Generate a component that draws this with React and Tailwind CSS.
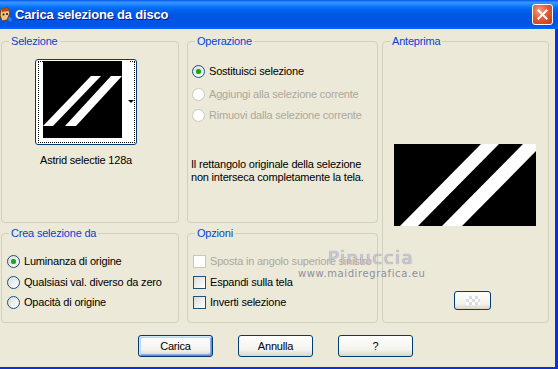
import React from 'react';

const font = "font-['Liberation_Sans',Arial,sans-serif]";

function Radio({ checked, disabled }) {
  return (
    <span
      className={`w-[13px] h-[13px] shrink-0 rounded-full border flex items-center justify-center ${
        disabled
          ? 'border-[#cac8bb] bg-white'
          : 'border-[#1c5180] bg-[linear-gradient(135deg,#dcdcd7,#ffffff)]'
      }`}
    >
      {checked && <span className="w-[5px] h-[5px] rounded-full bg-[#21a121] shadow-[0_0_1px_#5fd35f]" />}
    </span>
  );
}

function Check({ disabled }) {
  return (
    <span
      className={`w-[13px] h-[13px] shrink-0 border ${
        disabled
          ? 'border-[#cac8bb] bg-white'
          : 'border-[#1c5180] bg-[linear-gradient(135deg,#dcdcd7,#ffffff)]'
      }`}
    />
  );
}

function Group({ title, className, children }) {
  return (
    <fieldset className={`border border-[#d0d0bf] rounded-[4px] ${className}`}>
      <legend className="ml-[7px] px-[2px] leading-[13px] text-[#0046d5]">{title}</legend>
      {children}
    </fieldset>
  );
}

function Button({ children, isDefault }) {
  return (
    <button
      className={`w-[75px] h-[22px] rounded-[3px] border border-[#003c74] bg-[linear-gradient(to_bottom,#ffffff,#f3f2ec_70%,#d9d5c8)] text-black leading-[13px] ${
        isDefault
          ? 'shadow-[inset_1px_1px_0_#cee7ff,inset_-1px_-1px_0_#6982ee,inset_2px_2px_0_#bcd4f6,inset_-2px_-2px_0_#89ade4]'
          : ''
      }`}
    >
      {children}
    </button>
  );
}

export default function App() {
  return (
    <div className={`relative w-[558px] h-[369px] overflow-hidden bg-[#ece9d8] text-[11px] tracking-[-0.2px] text-black flex flex-col ${font}`}>
      {/* title bar */}
      <div className="h-[29px] shrink-0 flex items-center bg-[linear-gradient(to_bottom,#0058ee_0%,#3a93ff_8%,#288eff_14%,#127dff_20%,#036ffc_26%,#0262ee_36%,#0057e5_50%,#0054e3_80%,#0055eb_90%,#005bf5_94%,#026afe_97%,#0062ef_100%)]">
        <svg width="14" height="16" viewBox="0 0 14 16" className="ml-[-1px] mt-[1px]">
          <path d="M2 2 L9 1 L11 6 L8 13 L3 14 L1 8 Z" fill="#f2c27a" stroke="#7a3b12" strokeWidth="1" />
          <path d="M2 2 L9 1 L10 4 L3 5 Z" fill="#b64a1e" />
          <circle cx="4.5" cy="7.5" r="1" fill="#1a1a1a" />
          <circle cx="8" cy="7" r="1" fill="#1a1a1a" />
          <path d="M10 9 L13 12 L12 15 L9 13 Z" fill="#3f7fd8" />
        </svg>
        <span className="ml-[2px] text-white font-bold text-[13px] tracking-[-0.2px] font-['Liberation_Sans_Narrow','Liberation_Sans',sans-serif] [text-shadow:1px_1px_#0a1883]">
          Carica selezione da disco
        </span>
        <div className="ml-auto mr-[5px] w-[21px] h-[21px] rounded-[3px] border border-white bg-[radial-gradient(circle_at_35%_30%,#f0a080,#e35b36_45%,#c4381b)] flex items-center justify-center">
          <svg width="11" height="11" viewBox="0 0 11 11">
            <path d="M1.5 1.5 L9.5 9.5 M9.5 1.5 L1.5 9.5" stroke="white" strokeWidth="2" strokeLinecap="square" />
          </svg>
        </div>
      </div>

      {/* body */}
      <div className="flex-1 flex flex-col border-r-[3px] border-b-[2px] border-[#0831d9] pt-[6px] pl-[1px]">
        <div className="flex items-start">
          {/* column 1 */}
          <div className="w-[178px] flex flex-col">
            <Group title="Selezione" className="h-[188px]">
              <div className="ml-[33px] mt-[11px] w-[102px] flex flex-col">
                <div className="relative w-[102px] h-[86px] rounded-[3px] border border-[#003c74] bg-white p-[1px_1px_1px_2px]">
                  <div className="w-[97px] h-[82px] border border-dotted border-black pl-[4px]">
                    <div className="flex h-[77px] mt-[-1px]">
                      <svg width="79" height="77" viewBox="0 0 79 77">
                        <rect width="79" height="77" fill="#000" />
                        <polygon points="48,15 58,15 10,65 0,65" fill="#fff" />
                        <polygon points="68,15 79,15 33,65 22,65" fill="#fff" />
                      </svg>
                      <div className="w-[7px] bg-white" />
                    </div>
                  </div>
                  <span className="absolute right-[2px] top-[40px] w-0 h-0 border-l-[3px] border-r-[3px] border-t-[3px] border-l-transparent border-r-transparent border-t-black" />
                </div>
                <div className="mt-[9px] leading-[13px] text-center whitespace-nowrap">Astrid selectie 128a</div>
              </div>
            </Group>
            <Group title="Crea selezione da" className="mt-[4px] h-[96px]">
              <div className="flex flex-col pl-[5px] whitespace-nowrap">
                <label className="mt-[13px] h-[16px] flex items-center gap-[4px]">
                  <Radio checked /> Luminanza di origine
                </label>
                <label className="mt-[5px] h-[16px] flex items-center gap-[4px]">
                  <Radio /> Qualsiasi val. diverso da zero
                </label>
                <label className="mt-[4px] h-[16px] flex items-center gap-[4px]">
                  <Radio /> Opacità di origine
                </label>
              </div>
            </Group>
          </div>

          {/* column 2 */}
          <div className="ml-[8px] w-[191px] flex flex-col">
            <Group title="Operazione" className="h-[188px]">
              <div className="flex flex-col pl-[4px] whitespace-nowrap">
                <label className="mt-[15px] h-[16px] flex items-center gap-[4px]">
                  <Radio checked /> Sostituisci selezione
                </label>
                <label className="mt-[7px] h-[16px] flex items-center gap-[4px] text-[#aca899]">
                  <Radio disabled /> Aggiungi alla selezione corrente
                </label>
                <label className="mt-[5px] h-[16px] flex items-center gap-[4px] text-[#aca899]">
                  <Radio disabled /> Rimuovi dalla selezione corrente
                </label>
                <p className="mt-[35px] ml-[-1px] leading-[13px]">
                  Il rettangolo originale della selezione
                  <br />
                  non interseca completamente la tela.
                </p>
              </div>
            </Group>
            <Group title="Opzioni" className="mt-[4px] h-[96px]">
              <div className="flex flex-col pl-[5px] whitespace-nowrap">
                <label className="mt-[13px] h-[16px] flex items-center gap-[4px] text-[#aca899]">
                  <Check disabled /> Sposta in angolo superiore sinistro
                </label>
                <label className="mt-[5px] h-[16px] flex items-center gap-[4px]">
                  <Check /> Espandi sulla tela
                </label>
                <label className="mt-[4px] h-[16px] flex items-center gap-[4px]">
                  <Check /> Inverti selezione
                </label>
              </div>
            </Group>
          </div>

          {/* column 3 */}
          <div className="ml-[4px] w-[167px]">
            <Group title="Anteprima" className="h-[288px]">
              <div className="flex flex-col pl-[11px]">
                <svg width="142" height="82" viewBox="0 0 142 82" className="mt-[96px]">
                  <rect width="142" height="82" fill="#000" />
                  <polygon points="87,0 105,0 24,82 6,82" fill="#fff" />
                  <polygon points="129,0 149,0 68,82 48,82" fill="#fff" />
                </svg>
                <div className="mt-[65px] ml-[60px] w-[37px] h-[19px] rounded-[3px] border border-[#003c74] bg-[linear-gradient(to_bottom,#ffffff,#f3f2ec_70%,#d9d5c8)] flex items-center justify-center">
                  <div className="w-[14px] h-[9px] bg-[conic-gradient(#dcdcdc_25%,#ffffff_0_50%,#dcdcdc_0_75%,#ffffff_0)] bg-[length:6px_6px]" />
                </div>
              </div>
            </Group>
          </div>
        </div>

        {/* buttons */}
        <div className="mt-[12px] pl-[137px] flex gap-[25px]">
          <Button isDefault>Carica</Button>
          <Button>Annulla</Button>
          <Button>?</Button>
        </div>
      </div>

      {/* watermark */}
      <div className="absolute left-[328px] top-[244px] text-[18px] tracking-[1.5px] text-[#c8c8d8] font-['DejaVu_Sans',sans-serif] [text-shadow:0_0_1px_#7d7d92] pointer-events-none">
        Pinuccia
      </div>
      <div className="absolute left-[298px] top-[266px] text-[10px] tracking-[0.6px] text-[#8f8f9e] font-['DejaVu_Sans',sans-serif] pointer-events-none">
        www.maidiregrafica.eu
      </div>
    </div>
  );
}
